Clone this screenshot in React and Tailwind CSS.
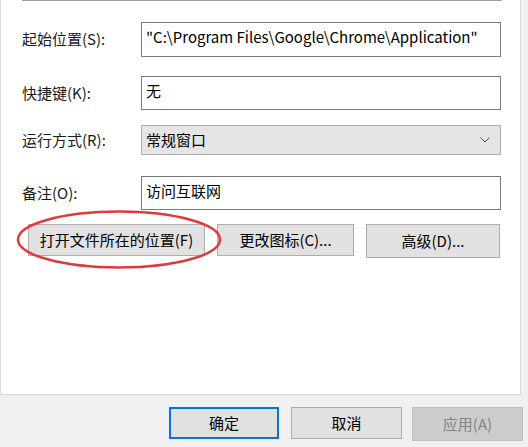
import React from 'react';

const font = { fontFamily: '"Noto Sans CJK SC", "Noto Sans", sans-serif' };

function Field({ label, value, h = 'h-[35px]' }) {
  return (
    <>
      <div className="flex items-center text-[15px] text-[#1a1a1a]">{label}</div>
      <div className={`${h} border border-[#7a7a7a] bg-white px-[4px] pt-[3px] text-[15px] leading-[22px] text-black whitespace-nowrap overflow-hidden`}>
        {value}
      </div>
    </>
  );
}

export default function App() {
  return (
    <div className="relative w-[528px] h-[447px] bg-[#f0f0f0] overflow-hidden" style={font}>
      {/* properties panel */}
      <div className="w-[521px] h-[395px] bg-white border-l border-r border-b border-[#d9d9d9]">
        <div className="ml-[21px] w-[480px] h-px bg-[#a0a0a0]" />

        <div className="grid grid-cols-[119px_360px] pl-[21px] mt-[21px]">
          <Field label="起始位置(S):" value={'"C:\\Program Files\\Google\\Chrome\\Application"'} />
          <div className="col-span-2 h-[19px]" />
          <Field label="快捷键(K):" value="无" h="h-[34px]" />
          <div className="col-span-2 h-[15px]" />

          <div className="flex items-center text-[15px] text-[#1a1a1a]">运行方式(R):</div>
          <div className="h-[30px] border border-[#adadad] bg-[#e5e5e5] flex items-center justify-between pl-[4px] pr-[10px] text-[15px] text-black">
            <span>常规窗口</span>
            <svg width="10" height="6" viewBox="0 0 10 6" fill="none" stroke="#555" strokeWidth="1">
              <path d="M0.5 0.5 L5 5 L9.5 0.5" />
            </svg>
          </div>
          <div className="col-span-2 h-[21px]" />

          <Field label="备注(O):" value="访问互联网" h="h-[34px]" />
        </div>

        {/* action buttons */}
        <div className="flex items-start mt-[14px] pl-[27px] text-[15px] text-black">
          <button className="w-[177px] h-[32px] bg-[#e1e1e1] border border-[#adadad]">打开文件所在的位置(F)</button>
          <button className="ml-[12px] w-[137px] h-[32px] bg-[#e1e1e1] border border-[#adadad]">更改图标(C)...</button>
          <button className="ml-[12px] w-[134px] h-[34px] bg-[#e1e1e1] border border-[#adadad]">高级(D)...</button>
        </div>
      </div>

      {/* dialog footer */}
      <div className="flex justify-end pr-[5px] pt-[12px] text-[15px]">
        <button className="w-[110px] h-[32px] bg-[#e1e1e1] border-2 border-[#0078d7] text-black">确定</button>
        <button className="ml-[12px] w-[111px] h-[32px] bg-[#e1e1e1] border border-[#adadad] text-black">取消</button>
        <button className="ml-[10px] w-[111px] h-[34px] bg-[#cccccc] border border-[#bfbfbf] text-[#838383]">应用(A)</button>
      </div>

      {/* red highlight around the first button */}
      <svg className="absolute left-[16px] top-[209px] pointer-events-none" width="208" height="62" viewBox="0 0 208 62" fill="none">
        <ellipse cx="103" cy="30.5" rx="101" ry="28" stroke="#e0393b" strokeWidth="2.5" />
      </svg>
    </div>
  );
}
